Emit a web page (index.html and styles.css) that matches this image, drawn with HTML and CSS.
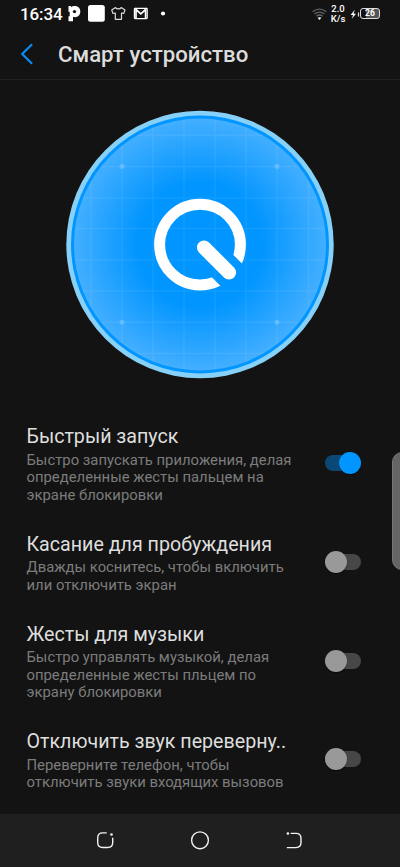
FILE: index.html
```html
<!DOCTYPE html>
<html lang="ru">
<head>
<meta charset="utf-8">
<meta name="viewport" content="width=device-width, initial-scale=1">
<title>Смарт устройство</title>
<link rel="stylesheet" href="styles.css">
</head>
<body>
<div class="screen">
  <div class="status">
    <span class="clock">16:34</span>
    <svg class="status-left" width="102" height="20" viewBox="68 4 102 20">
      <path d="M68.500 6h2.600v1.200C73 5.500 80.300 5 80.300 11.600c0 5.300-4.600 6.200-7.300 5.200v4.400h-4.500v-5h1.200v-4.400h-1.200z" fill="#fff"/>
      <circle cx="74.500" cy="11.600" r="1.700" fill="#141414"/>
      <rect x="88" y="5" width="16.800" height="16.800" rx="2.500" fill="#fff"/>
      <path d="M115.500 7.600c1.300 1.700 4.400 1.700 5.700 0l3.800 2.300-1.200 3.500-2.300-.4v6.300h-6.200V13l-2.400.4-1.200-3.500z" fill="none" stroke="#ddd" stroke-width="1.200" stroke-linejoin="round"/>
      <rect x="134.400" y="8.400" width="12.800" height="10.200" rx=".8" fill="none" stroke="#fff" stroke-width="1.200"/>
      <path d="M136 18.500V9.500l4.800 4.300 4.800-4.300v9" fill="none" stroke="#fff" stroke-width="1.700"/>
      <circle cx="163" cy="13.500" r="2.100" fill="#fff"/>
    </svg>
    <svg class="wifi" width="15" height="14" viewBox="312 6 15 14">
      <g fill="none" stroke="#626262" stroke-width="1.300">
        <path d="M312.600 10.700q6.900-5 13.800 0"/>
        <path d="M314.500 13q5-3.800 10 0"/>
        <path d="M316.400 15.200q3.100-2.400 6.200 0"/>
      </g>
      <path d="M317.600 16.800q1.900-1.300 3.800 0l-1.900 2.200z" fill="#fff"/>
    </svg>
    <span class="speed">2.0<br>K/s</span>
    <svg class="bolt" width="10" height="10" viewBox="350 8 10 10">
      <path d="M354.800 8.700l-4.200 5.300h2.500l-1.300 3.700 4.200-5h-2.500z" fill="#fff"/>
      <rect x="357.900" y="11.500" width="1.200" height="4" fill="#ddd"/>
    </svg>
    <span class="battery">26</span>
  </div>
  <header class="bar">
    <svg class="back" width="14" height="24" viewBox="0 0 14 24">
      <path d="M12.100 2.200L2.200 12l9.900 9.800" fill="none" stroke="#0a8cf5" stroke-width="2.200"/>
    </svg>
    <h1>Смарт устройство</h1>
  </header>
  <svg class="hero" width="270" height="270" viewBox="65 109 270 270">
    <defs>
      <radialGradient id="glow" gradientUnits="userSpaceOnUse" cx="200" cy="244.500" r="127">
        <stop offset=".48" stop-color="#0095ff"/>
        <stop offset="1" stop-color="#44afff"/>
      </radialGradient>
      <clipPath id="disc"><circle cx="200" cy="244.500" r="126"/></clipPath>
      <mask id="gap" maskUnits="userSpaceOnUse" x="150" y="195" width="100" height="100">
        <rect x="150" y="195" width="100" height="100" fill="#fff"/>
        <path d="M215 258.500l40 40" stroke="#000" stroke-width="31"/>
      </mask>
    </defs>
    <circle cx="200" cy="244.500" r="133.700" fill="#87d0f7"/>
    <circle cx="200" cy="244.500" r="129" fill="#0095ff"/>
    <circle cx="200" cy="244.500" r="126" fill="url(#glow)"/>
    <g clip-path="url(#disc)">
      <path d="M91 110v270M122 110v270M153 110v270M184 110v270M215 110v270M246 110v270M277 110v270M308.500 110v270M65 135.300h270M65 166.500h270M65 198h270M65 228.500h270M65 260h270M65 291h270M65 322.300h270M65 353.500h270" fill="none" stroke="#fff" stroke-opacity=".07" stroke-width="1.500"/>
      <g fill="#fff" fill-opacity=".2">
        <circle cx="122" cy="166.500" r="2.500"/><circle cx="277" cy="166.500" r="2.500"/>
        <circle cx="122" cy="322.300" r="2.500"/><circle cx="277" cy="322.300" r="2.500"/>
      </g>
    </g>
    <circle cx="200" cy="244.600" r="40.400" fill="none" stroke="#fff" stroke-width="11" mask="url(#gap)"/>
    <path d="M204 247.500l25 25" stroke="#fff" stroke-width="14.200" stroke-linecap="round"/>
  </svg>
  <main class="list">
    <section class="item">
      <div class="text"><h2>Быстрый запуск</h2><p>Быстро запускать приложения, делая<br>определенные жесты пальцем на<br>экране блокировки</p></div>
      <span class="switch on"></span>
    </section>
    <section class="item">
      <div class="text"><h2>Касание для пробуждения</h2><p>Дважды коснитесь, чтобы включить<br>или отключить экран</p></div>
      <span class="switch"></span>
    </section>
    <section class="item">
      <div class="text"><h2>Жесты для музыки</h2><p>Быстро управлять музыкой, делая<br>определенные жесты пльцем по<br>экрану блокировки</p></div>
      <span class="switch"></span>
    </section>
    <section class="item">
      <div class="text"><h2>Отключить звук переверну..</h2><p>Переверните телефон, чтобы<br>отключить звуки входящих вызовов</p></div>
      <span class="switch"></span>
    </section>
  </main>
  <nav class="nav">
    <svg width="20" height="20" viewBox="95 830 20 20" fill="none" stroke="#f2f2f2" stroke-width="1.400">
      <path d="M106.700 832.900h-4q-5 0-5 5v4.600q0 5 5 5h5q5 0 5-5v-4.800"/><circle cx="111.500" cy="834.500" r="1.300" fill="#f2f2f2" stroke="none"/>
    </svg>
    <svg width="20" height="20" viewBox="190 830 20 20" fill="none" stroke="#f2f2f2" stroke-width="1.400"><circle cx="200" cy="840.300" r="8.400"/></svg>
    <svg width="20" height="20" viewBox="285 830 20 20" fill="none" stroke="#f2f2f2" stroke-width="1.400">
      <path d="M290.700 833.400h5.300q5 0 5 5v4.200q0 5-5 5h-9.200"/><circle cx="287.900" cy="833.500" r="1.300" fill="#f2f2f2" stroke="none"/>
    </svg>
  </nav>
  <div class="edge-handle"></div>
</div>
</body>
</html>
```
FILE: styles.css
```css
* { box-sizing: border-box; }
body { margin: 0; background: #131313; font-family: Roboto, "Noto Sans", sans-serif; }
h1, h2, p { margin: 0; white-space: nowrap; }
svg { display: block; flex: none; }
.screen { position: relative; width: 400px; height: 867px; overflow: hidden; display: flex; flex-direction: column; background: #131313; }
.status { height: 28px; flex: none; display: flex; align-items: center; padding-left: 20px; color: #fff; }
.clock { width: 48px; font-size: 17px; font-weight: 500; line-height: 28px; letter-spacing: -.1px; }
.status-left { margin-right: 142px; margin-top: -1px; }
.wifi { margin-right: 3px; margin-top: -1px; }
.speed { width: 16px; margin-right: 4px; font-size: 9.500px; line-height: 10px; font-weight: 500; text-align: center; white-space: nowrap; }
.bolt { margin-top: -1px; }
.battery { width: 20px; height: 11px; margin-top: -1px; border: 1px solid #ddd; border-radius: 3px; background: linear-gradient(90deg, transparent 30%, #555 30%); font-size: 8.500px; line-height: 9.500px; font-weight: 700; text-align: center; }
.bar { height: 52px; flex: none; display: flex; align-items: center; padding: 0 20px; border-bottom: 1px solid #222; }
.back { margin-right: 24px; }
h1 { font-size: 22.200px; line-height: 28px; font-weight: 500; color: #dcdcdc; }
.hero { margin: 29px auto 0; }
.list { margin-top: 30.400px; }
.item { display: flex; align-items: center; justify-content: space-between; padding: 14px 39px 12.500px 26.500px; }
h2 { margin-bottom: 1.500px; font-size: 19.650px; line-height: 27px; font-weight: 400; color: #dedede; }
p { font-size: 14.850px; line-height: 17.500px; color: #7c7c7c; }
.switch { position: relative; flex: none; width: 36px; height: 16px; margin-bottom: 1.500px; border-radius: 8px; background: #474747; }
.switch::after { content: ""; position: absolute; left: 0; top: -3px; width: 22px; height: 22px; border-radius: 50%; background: #999; box-shadow: 0 1px 1px #0008; }
.switch.on { background: #0b4876; }
.switch.on::after { left: 14px; background: #0095ff; }
.nav { height: 53.500px; width: 100%; margin-top: auto; flex: none; display: flex; justify-content: center; gap: 75px; align-items: center; background: #1f1f1f; }
.edge-handle { position: absolute; left: 392px; top: 452px; width: 20px; height: 118px; border: 1px solid #777; border-radius: 11px; background: #666564; }
```
